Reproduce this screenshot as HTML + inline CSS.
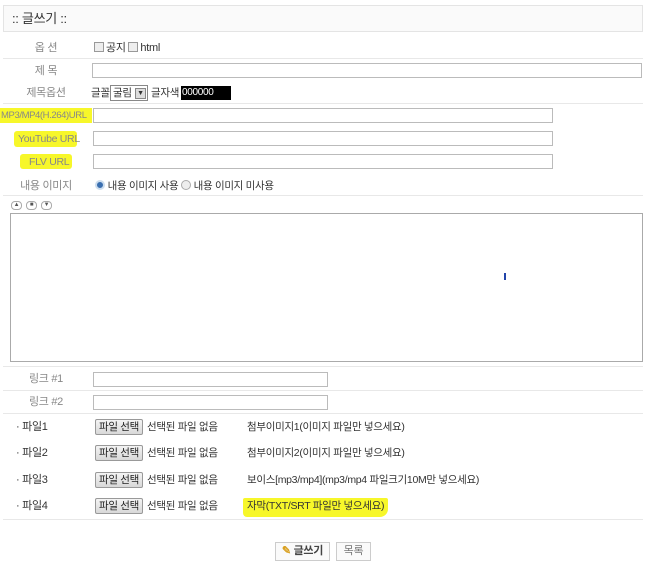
<!DOCTYPE html>
<html><head><meta charset="utf-8"><style>
*{margin:0;padding:0;box-sizing:border-box}
body{width:650px;height:571px;background:#fff;position:relative;overflow:hidden;font-family:"Liberation Sans","Noto Sans CJK KR","NanumGothic",sans-serif;font-size:11px;color:#333;letter-spacing:-0.3px}
.a{position:absolute;white-space:nowrap;line-height:14px}
.lbl{color:#888;text-align:center}
.hr{position:absolute;left:3px;width:640px;height:1px;background:#e8e8e8}
.in{position:absolute;border:1px solid #bbb;background:#fff;height:15px}
.y{position:absolute;background:#f7f72a}
.fb{position:absolute;left:95px;width:48px;height:16px;border:1px solid #999;border-radius:2px;background:linear-gradient(#f4f4f4,#d8d8d8);font-size:10.5px;text-align:center;line-height:14px;color:#222}
.cb{display:inline-block;width:10px;height:10px;border:1px solid #999;background:#eee;vertical-align:-1px;margin-right:2px}
</style></head><body>
<div class="a" style="left:3px;top:5px;width:640px;height:27px;border:1px solid #e4e4e4;background:#fafafa"></div>
<div class="a" style="left:12px;top:12px;font-size:13px;color:#333">:: 글쓰기 ::</div>

<div class="a lbl" style="left:0;width:92px;top:41px">옵 션</div>
<div class="a" style="left:94px;top:41px"><span class="cb"></span>공지 <span class="cb"></span>html</div>
<div class="hr" style="top:58px"></div>
<div class="a lbl" style="left:0;width:92px;top:64px">제 목</div>
<div class="in" style="left:92px;top:63px;width:550px"></div>
<div class="a lbl" style="left:0;width:92px;top:86px">제목옵션</div>
<div class="a" style="left:91px;top:86px;font-size:10.5px">글꼴</div>
<div class="a" style="left:110px;top:85px;width:38px;height:16px;border:1px solid #888;background:#fff;font-size:10.5px;padding-left:2px;line-height:14px">굴림<span style="position:absolute;right:1px;top:2px;width:11px;height:11px;background:#ddd;border:1px solid #888;font-size:7px;line-height:9px;text-align:center">▼</span></div>
<div class="a" style="left:151px;top:86px;font-size:10.5px">글자색</div>
<div class="a" style="left:181px;top:86px;width:50px;height:14px;background:#000;color:#fff;font-size:10px;line-height:14px;padding-left:1px">000000</div>
<div class="hr" style="top:103px"></div>

<div class="y" style="left:0;top:108px;width:92px;height:15px"></div>
<div class="a" style="left:1px;top:109px;color:#888;font-size:9.5px;letter-spacing:-0.4px">MP3/MP4(H.264)URL</div>
<div class="in" style="left:93px;top:108px;width:460px"></div>
<div class="y" style="left:14px;top:131px;width:63px;height:16px;border-radius:3px"></div>
<div class="a" style="left:18px;top:132px;color:#888;font-size:10.5px">YouTube URL</div>
<div class="in" style="left:93px;top:131px;width:460px"></div>
<div class="y" style="left:20px;top:154px;width:52px;height:15px;border-radius:3px"></div>
<div class="a" style="left:29px;top:155px;color:#888;font-size:10.5px">FLV URL</div>
<div class="in" style="left:93px;top:154px;width:460px"></div>
<div class="a lbl" style="left:0;width:92px;top:179px">내용 이미지</div>
<div class="a" style="left:95px;top:179px;font-size:10.5px"><span style="display:inline-block;width:10px;height:10px;border-radius:50%;background:#3a6fb0;border:2px solid #cde;vertical-align:-1px"></span> 내용 이미지 사용 <span style="display:inline-block;width:10px;height:10px;border-radius:50%;background:#eee;border:1px solid #aaa;vertical-align:-1px"></span> 내용 이미지 미사용</div>
<div class="hr" style="top:195px"></div>

<div class="a" style="left:11px;top:201px;width:11px;height:9px;border:1px solid #aaa;border-radius:4px;font-size:6px;line-height:7px;text-align:center;color:#555">▲</div>
<div class="a" style="left:26px;top:201px;width:11px;height:9px;border:1px solid #aaa;border-radius:4px;font-size:6px;line-height:7px;text-align:center;color:#555">■</div>
<div class="a" style="left:41px;top:201px;width:11px;height:9px;border:1px solid #aaa;border-radius:4px;font-size:6px;line-height:7px;text-align:center;color:#555">▼</div>
<div class="a" style="left:10px;top:213px;width:633px;height:149px;border:1px solid #aaa;background:#fff"></div>
<div class="a" style="left:504px;top:273px;width:2px;height:7px;background:#2244aa"></div>
<div class="hr" style="top:366px"></div>

<div class="a lbl" style="left:0;width:92px;top:372px">링크 #1</div>
<div class="in" style="left:93px;top:372px;width:235px"></div>
<div class="hr" style="top:390px"></div>
<div class="a lbl" style="left:0;width:92px;top:395px">링크 #2</div>
<div class="in" style="left:93px;top:395px;width:235px"></div>
<div class="hr" style="top:413px"></div>

<div class="a" style="left:16px;top:420px">· 파일1</div>
<div class="fb" style="top:419px">파일 선택</div>
<div class="a" style="left:147px;top:420px;font-size:10.5px">선택된 파일 없음</div>
<div class="a" style="left:247px;top:420px;font-size:10.5px">첨부이미지1(이미지 파일만 넣으세요)</div>

<div class="a" style="left:16px;top:446px">· 파일2</div>
<div class="fb" style="top:445px">파일 선택</div>
<div class="a" style="left:147px;top:446px;font-size:10.5px">선택된 파일 없음</div>
<div class="a" style="left:247px;top:446px;font-size:10.5px">첨부이미지2(이미지 파일만 넣으세요)</div>

<div class="a" style="left:16px;top:473px">· 파일3</div>
<div class="fb" style="top:472px">파일 선택</div>
<div class="a" style="left:147px;top:473px;font-size:10.5px">선택된 파일 없음</div>
<div class="a" style="left:247px;top:473px;font-size:10.5px">보이스[mp3/mp4](mp3/mp4 파일크기10M만 넣으세요)</div>

<div class="y" style="left:243px;top:498px;width:145px;height:19px;border-radius:2px 2px 8px 4px"></div>
<div class="a" style="left:16px;top:499px">· 파일4</div>
<div class="fb" style="top:498px">파일 선택</div>
<div class="a" style="left:147px;top:499px;font-size:10.5px">선택된 파일 없음</div>
<div class="a" style="left:247px;top:499px;font-size:10.5px">자막(TXT/SRT 파일만 넣으세요)</div>
<div class="hr" style="top:519px"></div>

<div class="a" style="left:275px;top:542px;width:55px;height:19px;border:1px solid #ccc;background:#fafafa;font-size:11px;line-height:17px;text-align:center;font-weight:bold;color:#444"><span style="color:#d9a020">✎</span> 글쓰기</div>
<div class="a" style="left:336px;top:542px;width:35px;height:19px;border:1px solid #ccc;background:#fafafa;font-size:11px;line-height:17px;text-align:center;color:#777">목록</div>
</body></html>
